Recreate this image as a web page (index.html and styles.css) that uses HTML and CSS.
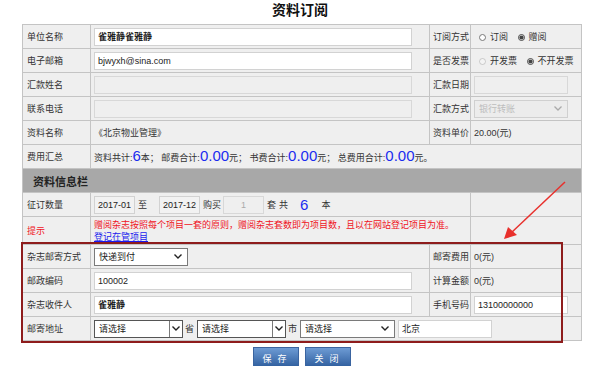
FILE: index.html
```html
<!DOCTYPE html>
<html lang="zh-CN">
<head>
  <meta charset="UTF-8"/>
  <title>资料订阅</title>
  <link rel="stylesheet" href="styles.css">
</head>
<body>
<div class="wrap">
  <h1 class="title">资料订阅</h1>
  <div class="form_box">
    <table class="form_table">
      <colgroup>
        <col class="c1"/><col class="c2"/><col class="c3"/><col class="c4"/>
      </colgroup>
      <tr>
        <td class="lbl">单位名称</td>
        <td><input type="text" class="txt txt_long bold" value="雀雅静雀雅静"/></td>
        <td class="lbl lbl_r">订阅方式</td>
        <td>
          <label class="rd"><input type="radio" name="dy"/>订阅</label>
          <label class="rd"><input type="radio" name="dy" checked/>赠阅</label>
        </td>
      </tr>
      <tr>
        <td class="lbl">电子邮箱</td>
        <td><input type="text" class="txt txt_long" value="bjwyxh@sina.com"/></td>
        <td class="lbl lbl_r">是否发票</td>
        <td>
          <label class="rd"><input type="radio" name="fp" disabled/>开发票</label>
          <label class="rd"><input type="radio" name="fp" checked/>不开发票</label>
        </td>
      </tr>
      <tr>
        <td class="lbl">汇款姓名</td>
        <td><input type="text" class="txt txt_long" disabled/></td>
        <td class="lbl lbl_r">汇款日期</td>
        <td><input type="text" class="txt txt_short" disabled/></td>
      </tr>
      <tr>
        <td class="lbl">联系电话</td>
        <td><input type="text" class="txt txt_long" disabled/></td>
        <td class="lbl lbl_r">汇款方式</td>
        <td>
          <span class="sel_box sel_pay disabled">
            <select class="sel" disabled><option>银行转账</option></select>
            <svg class="chev" width="8" height="5" viewBox="0 0 8 5"><path d="M0.5 0.5 L4 4 L7.5 0.5" fill="none" stroke="#aaa" stroke-width="1.3"/></svg>
          </span>
        </td>
      </tr>
      <tr>
        <td class="lbl">资料名称</td>
        <td class="val">《北京物业管理》</td>
        <td class="lbl lbl_r">资料单价</td>
        <td class="val">20.00(元)</td>
      </tr>
      <tr>
        <td class="lbl">费用汇总</td>
        <td class="val" colspan="3">资料共计:<span class="num">6</span>本； 邮费合计:<span class="num">0.00</span>元； 书费合计:<span class="num">0.00</span>元； 总费用合计:<span class="num">0.00</span>元。</td>
      </tr>
      <tr>
        <td class="head" colspan="4">资料信息栏</td>
      </tr>
      <tr>
        <td class="lbl">征订数量</td>
        <td colspan="2" class="val">
          <input type="text" class="txt txt_num" value="2017-01"/><span class="gap gap_to">至</span><input type="text" class="txt txt_num" value="2017-12"/><span class="gap gap_buy">购买</span><input type="text" class="txt txt_num txt_center" value="1" disabled/><span class="gap">套</span><span class="gap">共</span><span class="num num_count">6</span><span class="gap">本</span>
        </td>
        <td></td>
      </tr>
      <tr class="tip_row">
        <td class="lbl red">提示</td>
        <td colspan="2" class="val">
          <div class="red">赠阅杂志按照每个项目一套的原则，赠阅杂志套数即为项目数，且以在网站登记项目为准。</div>
          <a href="#" class="link">登记在管项目</a>
        </td>
        <td></td>
      </tr>
      <tr>
        <td class="lbl">杂志邮寄方式</td>
        <td>
          <span class="sel_box sel_post">
            <select class="sel"><option>快递到付</option></select>
            <svg class="chev" width="8" height="5" viewBox="0 0 8 5"><path d="M0.5 0.5 L4 4 L7.5 0.5" fill="none" stroke="#222" stroke-width="1.4"/></svg>
          </span>
        </td>
        <td class="lbl lbl_r">邮寄费用</td>
        <td class="val">0(元)</td>
      </tr>
      <tr>
        <td class="lbl">邮政编码</td>
        <td><input type="text" class="txt txt_long" value="100002"/></td>
        <td class="lbl lbl_r">计算金额</td>
        <td class="val">0(元)</td>
      </tr>
      <tr>
        <td class="lbl">杂志收件人</td>
        <td><input type="text" class="txt txt_long bold" value="雀雅静"/></td>
        <td class="lbl lbl_r">手机号码</td>
        <td><input type="text" class="txt txt_short" value="13100000000"/></td>
      </tr>
      <tr>
        <td class="lbl">邮寄地址</td>
        <td colspan="3" class="val">
          <span class="sel_box sel_area old">
            <select class="sel"><option>请选择</option></select>
            <span class="old_btn"><svg width="8" height="5" viewBox="0 0 8 5"><path d="M0.5 0.5 L4 4 L7.5 0.5" fill="none" stroke="#222" stroke-width="1.4"/></svg></span>
          </span><span class="unit">省</span><span class="sel_box sel_area old">
            <select class="sel"><option>请选择</option></select>
            <span class="old_btn"><svg width="8" height="5" viewBox="0 0 8 5"><path d="M0.5 0.5 L4 4 L7.5 0.5" fill="none" stroke="#222" stroke-width="1.4"/></svg></span>
          </span><span class="unit">市</span><span class="sel_box sel_area3">
            <select class="sel"><option>请选择</option></select>
            <svg class="chev" width="8" height="5" viewBox="0 0 8 5"><path d="M0.5 0.5 L4 4 L7.5 0.5" fill="none" stroke="#222" stroke-width="1.4"/></svg>
          </span><input type="text" class="txt txt_addr" value="北京"/>
        </td>
      </tr>
    </table>

    <div class="mark_box"></div>
    <svg class="arrow" width="80" height="70" viewBox="0 0 80 70">
      <line x1="68" y1="2" x2="14" y2="53" stroke="#e8302c" stroke-width="1.5"/>
      <polygon points="7,59 11,47 20,55" fill="#e8302c"/>
    </svg>
  </div>

  <div class="btns">
    <button class="btn">保 存</button>
    <button class="btn">关 闭</button>
  </div>
</div>
</body>
</html>
```

FILE: styles.css
```css
body {
    margin: 0;
    background-color: #fff;
    font-family: "Liberation Sans", "Noto Sans CJK SC", sans-serif;
    font-size: 9px;
    color: #333;
}

.wrap {
    width: 600px;
}

.title {
    margin: 0;
    height: 24px;
    line-height: 20px;
    font-size: 14px;
    font-weight: bold;
    text-align: center;
    color: #111;
}

.form_box {
    position: relative;
    width: 559px;
    margin-left: 22px;
}

.form_table {
    width: 559px;
    border-collapse: collapse;
    table-layout: fixed;
}

.c1 { width: 68px; }
.c2 { width: 339px; }
.c3 { width: 41px; }
.c4 { width: 111px; }

.form_table td {
    height: 23px;
    padding: 0 3px;
    border: 1px solid #c4c4c4;
    background-color: #efefef;
    white-space: nowrap;
    vertical-align: middle;
    overflow: hidden;
}

.form_table .lbl {
    padding-left: 4px;
}

.form_table .lbl_r {
    padding: 0 0 0 3px;
}

.form_table .head {
    background-color: #a8a8a8;
    padding-left: 10px;
    font-size: 11px;
    font-weight: bold;
    color: #222;
}

.tip_row td {
    height: 27px;
    line-height: 12px;
}

.red {
    color: #f0141e;
}

.link {
    color: #1a1aee;
    text-decoration: underline;
}

.num {
    font-size: 15px;
    line-height: 12px;
    color: #1a2cf0;
}

.num_count {
    display: inline-block;
    vertical-align: middle;
    margin: 0 10px 0 12px;
}

.txt {
    box-sizing: border-box;
    height: 18px;
    padding: 0 3px;
    border: 1px solid #d2d2d2;
    background-color: #fff;
    font-family: inherit;
    font-size: 9px;
    color: #222;
    vertical-align: middle;
}

.txt:disabled {
    background-color: #efefef;
    border-color: #d8d8d8;
    color: #aaa;
}

.txt_long { width: 318px; }
.txt_short { width: 94px; }
.txt_num { width: 41px; background-color: #f2f2f2; }
.txt_center { text-align: center; }
.txt_addr { width: 94px; margin-left: 3px; }

.bold {
    font-weight: bold;
}

.gap {
    display: inline-block;
    margin: 0 0 0 3px;
    vertical-align: middle;
}

.gap_to { margin-right: 12px; }
.gap_buy { margin-right: 2px; }

/* select with drawn arrow */
.sel_box {
    position: relative;
    display: inline-block;
    box-sizing: border-box;
    height: 18px;
    vertical-align: middle;
    border: 1px solid #7a7a7a;
    background-color: #fff;
}

.sel_box.disabled {
    border-color: #d0d0d0;
    background-color: #ececec;
}

.sel {
    appearance: none;
    -webkit-appearance: none;
    display: block;
    width: 100%;
    height: 16px;
    margin: 0;
    padding: 0 0 0 4px;
    border: none;
    outline: none;
    background: transparent;
    font-family: inherit;
    font-size: 9px;
    color: #222;
}

.sel:disabled {
    color: #aaa;
}

.chev {
    position: absolute;
    right: 5px;
    top: 5px;
    pointer-events: none;
}

.old_btn {
    position: absolute;
    right: 0;
    top: 0;
    bottom: 0;
    width: 12px;
    display: flex;
    align-items: center;
    justify-content: center;
    border-left: 1px solid #7a7a7a;
    background-color: #fff;
    pointer-events: none;
}

.sel_pay { width: 94px; }
.sel_post { width: 94px; }
.sel_area { width: 89px; border-color: #555; }
.sel_area3 { width: 95px; }

.unit {
    display: inline-block;
    margin: 0 3px 0 2px;
    vertical-align: middle;
}

.rd {
    display: inline-block;
    margin-right: 2px;
    vertical-align: middle;
}

.rd input {
    width: 7px;
    height: 7px;
    margin: 0 4px 0 5px;
    vertical-align: -1px;
    accent-color: #444;
}

.mark_box {
    position: absolute;
    left: -1px;
    top: 218px;
    width: 538px;
    height: 97px;
    border: 2px solid #8e1c1c;
    pointer-events: none;
}

.arrow {
    position: absolute;
    left: 475px;
    top: 156px;
}

.btns {
    display: flex;
    justify-content: center;
    gap: 6px;
    margin-top: 6px;
    padding-left: 3px;
}

.btn {
    width: 46px;
    height: 22px;
    border: 1px solid #3a64a0;
    background: linear-gradient(#6d9bd4, #2c5b9b);
    color: #fff;
    font-family: "Noto Sans CJK SC", sans-serif;
    font-size: 9px;
    letter-spacing: 2px;
}
```
